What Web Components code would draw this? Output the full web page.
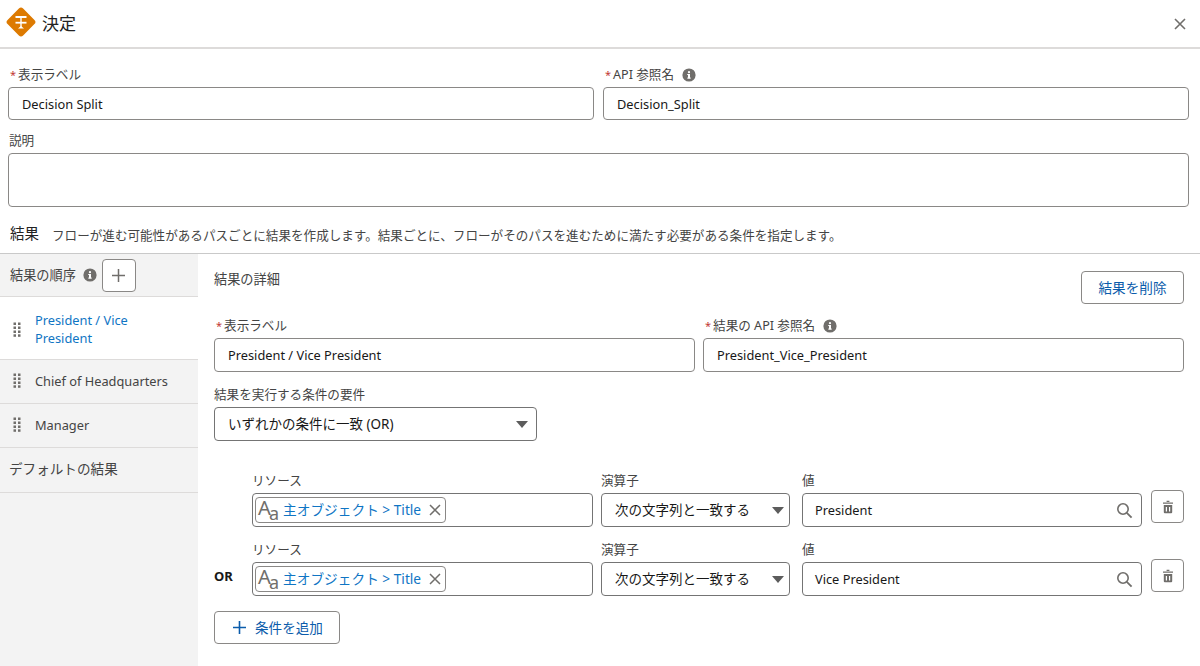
<!DOCTYPE html>
<html lang="ja"><head><meta charset="utf-8"><title>決定</title>
<style>
html,body{margin:0;padding:0;background:#fff;height:666px;overflow:hidden}
body{font:13px/18px "Noto Sans","Noto Sans CJK JP",sans-serif;color:#181818}
</style></head><body>
<x-app></x-app>
<script>
const FONT='"Noto Sans","Noto Sans CJK JP",sans-serif';
const INFO=`<svg width="14" height="14" viewBox="0 0 14 14"><circle cx="7" cy="7" r="6.6" fill="#706e6b"/><rect x="6" y="6" width="2" height="4.4" fill="#fff"/><rect x="5.2" y="6" width="2.2" height="1" fill="#fff"/><rect x="5.2" y="9.6" width="3.6" height="1" fill="#fff"/><circle cx="7" cy="4.2" r="1.1" fill="#fff"/></svg>`;
function def(name,css,html){
  customElements.define(name,class extends HTMLElement{
    connectedCallback(){
      if(this.shadowRoot)return;
      const r=this.attachShadow({mode:'open'});
      r.innerHTML=`<style>${css}</style>`+(typeof html==='function'?html(this):html);
    }
  });
}
const a=(e,n,d='')=>e.getAttribute(n)??d;

def('x-info',':host{display:inline-flex;vertical-align:middle}',INFO);

def('x-header',`:host{display:flex;align-items:center;height:47px;border-bottom:2px solid #dddbda;padding:0 13px 0 5px}
 h1{font:400 17px/20px ${FONT};margin:0 0 0 5px;flex:1;color:#222}svg{display:block}`,
 `<svg style="margin-bottom:3px" width="32" height="32" viewBox="0 0 32 32"><rect x="5" y="5" width="22" height="22" rx="3" transform="rotate(45 16 16)" fill="#dd7a01"/>
 <rect x="10.500" y="10" width="11" height="2" fill="#fff"/><rect x="10.500" y="15.800" width="11" height="1.800" fill="#fff"/><rect x="15.300" y="12" width="1.400" height="9" fill="#fff"/><path d="M13 22.500h6l-3-2.400z" fill="#fff"/></svg>
 <h1>決定</h1>
 <svg width="14" height="14" viewBox="0 0 14 14"><path d="M2 2l10 10M12 2L2 12" stroke="#706e6b" stroke-width="1.600" fill="none"/></svg>`);

def('x-field',`:host{display:block;min-width:0}
 label{display:flex;align-items:center;font:400 12.600px/16px ${FONT};color:#444;height:16px;margin-bottom:4px;padding-left:1px;white-space:nowrap}
 :host([req]) label{padding-left:2px}
 i{color:#c23934;font-style:normal;font-size:11px;margin-right:2px}
 x-info{margin-left:8px}
 .box{height:var(--h,34px);box-sizing:border-box;border:1px solid #8a8886;border-radius:4px;padding:0 13px;display:flex;align-items:center;font:400 12.800px/18px ${FONT};color:#181818;background:#fff}
 :host([area]) .box{height:54px}`,
 e=>`<label>${e.hasAttribute('req')?'<i>*</i>':''}${a(e,'label')}${e.hasAttribute('info')?'<x-info></x-info>':''}</label><div class="box">${a(e,'value')}</div>`);

def('x-select',`:host{display:block}
 label{display:block;font:400 12.600px/16px ${FONT};color:#444;height:16px;margin-bottom:4px}
 .box{height:34px;box-sizing:border-box;border:1px solid #747474;border-radius:4px;padding:0 8px 0 13px;display:flex;align-items:center;justify-content:space-between;font:400 13.500px/18px ${FONT};color:#181818;background:#fff}`,
 e=>`<label>${a(e,'label')}</label><div class="box"><span>${a(e,'value')}</span><svg width="12" height="7" viewBox="0 0 12 7"><path d="M0 0h12L6 7z" fill="#5c5c5c"/></svg></div>`);

def('x-pill',`:host{display:inline-flex;align-items:center;height:26px;box-sizing:border-box;border:1px solid #8a8886;border-radius:4px;padding:0 4px 0 2px;background:#fff}
 .ic{position:relative;width:24px;height:24px;font-family:${FONT};color:#706e6b;flex:none}
 .ic b{position:absolute;font-weight:400;left:0;top:-2px;font-size:20px;line-height:24px}
 .ic u{position:absolute;text-decoration:none;left:11px;top:4px;font-size:18px;line-height:22px}
 span{font:400 13.700px/18px ${FONT};color:#0f75c4;margin-left:1px;white-space:nowrap}
 svg{margin-left:8px;display:block}`,
 e=>`<div class="ic"><b>A</b><u>a</u></div><span>${a(e,'value')}</span><svg width="12" height="12" viewBox="0 0 12 12"><path d="M1 1l10 10M11 1L1 11" stroke="#706e6b" stroke-width="1.500" fill="none"/></svg>`);

def('x-condition',`:host{display:grid;grid-template-columns:38px 341px 209px 340px 42px;align-items:start}
 .or{font:700 13px/16px ${FONT};color:#181818;align-self:center;padding-top:13px}
 .lab{display:block;font:400 12.600px/16px ${FONT};color:#444;height:16px;margin-bottom:4px}
 .box{height:34px;box-sizing:border-box;border:1px solid #747474;border-radius:4px;display:flex;align-items:center;background:#fff;font:400 12.800px/18px ${FONT};color:#181818}
 .res .box{padding-left:2px}
 .op{margin-left:8px;margin-right:12px}.op .box{padding:0 5px 0 13px;justify-content:space-between;font-size:13.500px}
 .op svg{flex:none}
 .val .box{padding:0 8px 0 12px;justify-content:space-between}
 .tr{margin-left:9px;margin-top:17px;width:33px;height:33px;box-sizing:border-box;border:1px solid #8a8886;border-radius:4px;display:flex;align-items:center;justify-content:center}`,
 e=>`<div class="or">${a(e,'or')}</div>
 <div class="res"><span class="lab">リソース</span><div class="box"><x-pill value="主オブジェクト &gt; Title"></x-pill></div></div>
 <div class="op"><span class="lab">演算子</span><div class="box"><span>次の文字列と一致する</span><svg width="12" height="7" viewBox="0 0 12 7"><path d="M0 0h12L6 7z" fill="#5c5c5c"/></svg></div></div>
 <div class="val"><span class="lab">値</span><div class="box"><span>${a(e,'value')}</span><svg width="17" height="17" viewBox="0 0 17 17"><circle cx="7" cy="7" r="5.200" stroke="#706e6b" stroke-width="1.600" fill="none"/><path d="M10.800 10.800l4.800 4.800" stroke="#706e6b" stroke-width="1.800"/></svg></div></div>
 <div class="tr"><svg width="14" height="14" viewBox="0 0 14 14"><path d="M5.600 1.400h2.800M2 3.200h10" stroke="#706e6b" stroke-width="1.300" fill="none"/><path d="M2.800 5h8.400v7.200a1 1 0 0 1-1 1H3.800a1 1 0 0 1-1-1z" fill="#706e6b"/><path d="M5.400 7v4.400M8.600 7v4.400" stroke="#fff" stroke-width="1.200"/></svg></div>`);

def('x-btn',`:host{display:inline-flex;align-items:center;justify-content:center;height:33px;box-sizing:border-box;border:1px solid #8a8886;border-radius:4px;background:#fff;font:400 13.600px/18px ${FONT};color:#0b5cab;white-space:nowrap}
 :host([plus]){justify-content:flex-start;padding-left:18px}
 svg{margin-right:9px}`,
 e=>`${e.hasAttribute('plus')?'<svg width="13" height="13" viewBox="0 0 13 13"><path d="M6.500 0v13M0 6.500h13" stroke="#0b5cab" stroke-width="1.600"/></svg>':''}<slot></slot>`);

def('x-side-item',`:host{display:flex;align-items:center;box-sizing:border-box;border-bottom:1px solid #dddbda;background:#f3f3f3;padding:0 0 2px 13px;height:44px;font:400 12.800px/18px ${FONT};color:#444}
 :host([active]){background:#fff;color:#0f75c4;height:63px;padding:2px 0 0 13px}
 :host([plain]){padding-left:9px;font-size:13.600px;height:45px;color:#444}
 svg{flex:none;margin-right:13px}`,
 e=>`${e.hasAttribute('plain')?'':'<svg width="9" height="15" viewBox="0 0 9 15" fill="#706e6b"><rect x="0.500" y="0.500" width="2.500" height="2.500"/><rect x="5" y="0.500" width="2.500" height="2.500"/><rect x="0.500" y="4.500" width="2.500" height="2.500"/><rect x="5" y="4.500" width="2.500" height="2.500"/><rect x="0.500" y="8.500" width="2.500" height="2.500"/><rect x="5" y="8.500" width="2.500" height="2.500"/><rect x="0.500" y="12.300" width="2.500" height="2.500"/><rect x="5" y="12.300" width="2.500" height="2.500"/></svg>'}<span><slot></slot></span>`);

def('x-sidebar',`:host{display:block;width:198px;background:#f3f3f3;flex:none}
 .head{display:flex;align-items:center;height:43px;box-sizing:border-box;border-bottom:1px solid #dddbda;padding-left:10px;font:400 13.200px/16px ${FONT};color:#444}
 x-info{margin-left:7px}
 .add{margin-left:5px;width:34px;height:33px;box-sizing:border-box;border:1px solid #8a8886;border-radius:4px;background:#fff;display:flex;align-items:center;justify-content:center}`,
 `<div class="head">結果の順序<x-info></x-info><div class="add"><svg width="13" height="13" viewBox="0 0 13 13"><path d="M6.500 0v13M0 6.500h13" stroke="#706e6b" stroke-width="1.500"/></svg></div></div><slot></slot>`);

def('x-outcome',`:host{display:block;flex:1;min-width:0;padding:17px 16px 0}
 .top{display:flex;justify-content:space-between;align-items:flex-start;height:47px}
 .top span{font:400 13.200px/16px ${FONT};color:#444}
 .two{display:grid;grid-template-columns:481px 481px;column-gap:8px}
 .sel{width:323px;margin-top:15px;margin-bottom:32px}
 x-condition+x-condition{margin-top:15px}
 .add{width:126px;margin-top:15px}`,
 `<div class="top"><span>結果の詳細</span><x-btn style="width:103px">結果を削除</x-btn></div>
 <div class="two"><x-field req label="表示ラベル" value="President / Vice President"></x-field><x-field req info label="結果の API 参照名" value="President_Vice_President"></x-field></div>
 <x-select class="sel" label="結果を実行する条件の要件" value="いずれかの条件に一致 (OR)"></x-select>
 <x-condition value="President"></x-condition>
 <x-condition or="OR" value="Vice President"></x-condition>
 <x-btn class="add" plus>条件を追加</x-btn>`);

def('x-app',`:host{display:block;height:666px;overflow:hidden}
 .form{padding:18px 11px 0 8px;--h:33px}
 .two{display:grid;grid-template-columns:586px 586px;column-gap:9px}
 .desc{margin-top:13px;--h:54px}
 .sec{display:flex;align-items:flex-start;height:46px;box-sizing:border-box;padding:16px 0 0 10px}
 .sec b{font:400 14.500px/20px ${FONT};color:#222}
 .sec span{font:400 12.580px/16px ${FONT};color:#444;margin:5px 0 0 13px;white-space:nowrap}
 .pan{display:flex;height:412px;border-top:1px solid #c9c9c9}`,
 `<x-header></x-header>
 <div class="form">
  <div class="two"><x-field req label="表示ラベル" value="Decision Split"></x-field><x-field req info label="API 参照名" value="Decision_Split"></x-field></div>
  <x-field class="desc" area label="説明"></x-field>
 </div>
 <div class="sec"><b>結果</b><span>フローが進む可能性があるパスごとに結果を作成します。結果ごとに、フローがそのパスを進むために満たす必要がある条件を指定します。</span></div>
 <div class="pan">
  <x-sidebar>
   <x-side-item active>President / Vice<br>President</x-side-item>
   <x-side-item>Chief of Headquarters</x-side-item>
   <x-side-item>Manager</x-side-item>
   <x-side-item plain>デフォルトの結果</x-side-item>
  </x-sidebar>
  <x-outcome></x-outcome>
 </div>`);
</script>
</body></html>
